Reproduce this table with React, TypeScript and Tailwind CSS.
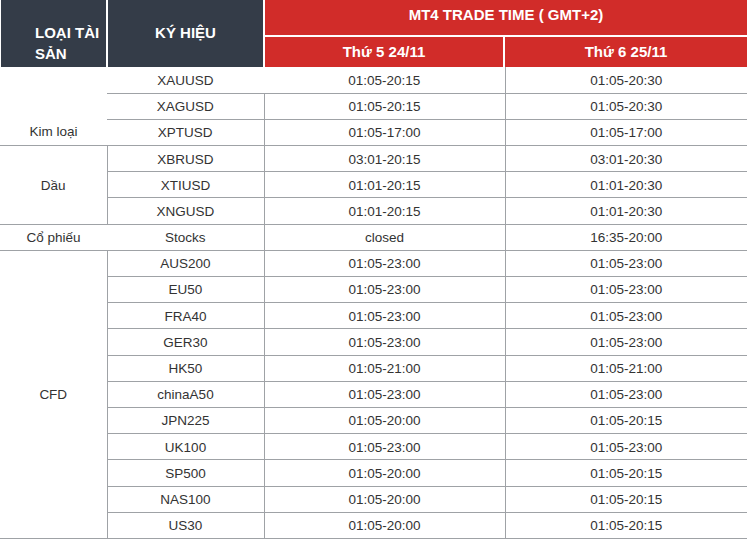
import React from 'react';

type Row = { sym: string; d1: string; d2: string };
type Group = { name: string; rows: Row[]; sideBorder: boolean; labelBottom?: boolean };

const groups: Group[] = [
  {
    name: 'Kim loại',
    sideBorder: false,
    labelBottom: true,
    rows: [
      { sym: 'XAUUSD', d1: '01:05-20:15', d2: '01:05-20:30' },
      { sym: 'XAGUSD', d1: '01:05-20:15', d2: '01:05-20:30' },
      { sym: 'XPTUSD', d1: '01:05-17:00', d2: '01:05-17:00' },
    ],
  },
  {
    name: 'Dầu',
    sideBorder: true,
    rows: [
      { sym: 'XBRUSD', d1: '03:01-20:15', d2: '03:01-20:30' },
      { sym: 'XTIUSD', d1: '01:01-20:15', d2: '01:01-20:30' },
      { sym: 'XNGUSD', d1: '01:01-20:15', d2: '01:01-20:30' },
    ],
  },
  {
    name: 'Cổ phiếu',
    sideBorder: false,
    rows: [{ sym: 'Stocks', d1: 'closed', d2: '16:35-20:00' }],
  },
  {
    name: 'CFD',
    sideBorder: true,
    rows: [
      { sym: 'AUS200', d1: '01:05-23:00', d2: '01:05-23:00' },
      { sym: 'EU50', d1: '01:05-23:00', d2: '01:05-23:00' },
      { sym: 'FRA40', d1: '01:05-23:00', d2: '01:05-23:00' },
      { sym: 'GER30', d1: '01:05-23:00', d2: '01:05-23:00' },
      { sym: 'HK50', d1: '01:05-21:00', d2: '01:05-21:00' },
      { sym: 'chinaA50', d1: '01:05-23:00', d2: '01:05-23:00' },
      { sym: 'JPN225', d1: '01:05-20:00', d2: '01:05-20:15' },
      { sym: 'UK100', d1: '01:05-23:00', d2: '01:05-23:00' },
      { sym: 'SP500', d1: '01:05-20:00', d2: '01:05-20:15' },
      { sym: 'NAS100', d1: '01:05-20:00', d2: '01:05-20:15' },
      { sym: 'US30', d1: '01:05-20:00', d2: '01:05-20:15' },
    ],
  },
];

const Header: React.FC = () => (
  <div className="flex h-[67px] bg-white text-white font-bold text-[15px]">
    <div className="ml-px w-[105px] bg-[#343c48] pl-[34px] pt-[22px] leading-[21px]">
      LOẠI TÀI
      <br />
      SẢN
    </div>
    <div className="ml-[2px] w-[155px] bg-[#343c48] pt-[22px] leading-[21px] text-center">KÝ HIỆU</div>
    <div className="ml-[2px] flex flex-1 flex-col gap-[2px]">
      <div className="flex h-[35px] items-center justify-center bg-[#d12c29] pb-1">MT4 TRADE TIME ( GMT+2)</div>
      <div className="flex h-[30px] gap-[2px]">
        <div className="flex w-[238px] items-center justify-center bg-[#d12c29]">Thứ 5 24/11</div>
        <div className="flex flex-1 items-center justify-center bg-[#d12c29]">Thứ 6 25/11</div>
      </div>
    </div>
  </div>
);

export default function App() {
  return (
    <div className="w-[747px] h-[540px] overflow-hidden bg-white font-['Liberation_Sans',Arial,sans-serif]">
      <Header />
      <table className="w-[747px] table-fixed border-collapse text-[13.5px] text-[#333]">
        <colgroup>
          <col className="w-[107px]" />
          <col className="w-[157px]" />
          <col className="w-[241px]" />
          <col className="w-[242px]" />
        </colgroup>
        <tbody>
          {groups.map((g) =>
            g.rows.map((r, i) => (
              <tr key={r.sym} className="h-[26.2px]">
                {i === 0 && (
                  <td
                    rowSpan={g.rows.length}
                    className={
                      'border-b border-[#9fa2a6] p-0 text-center ' +
                      (g.sideBorder ? 'border-r pt-[2px] ' : 'pt-[2px] ') +
                      (g.labelBottom ? 'align-bottom pb-[3px]' : 'align-middle')
                    }
                  >
                    {g.name}
                  </td>
                )}
                <td
                  className={
                    'border-b border-[#9fa2a6] p-0 pt-[2px] text-center ' +
                    (r.sym === 'XAUUSD' ? '' : 'border-r')
                  }
                >
                  {r.sym}
                </td>
                <td className="border-b border-r border-[#9fa2a6] p-0 pt-[2px] text-center">{r.d1}</td>
                <td className="border-b border-[#9fa2a6] p-0 pt-[2px] text-center">{r.d2}</td>
              </tr>
            ))
          )}
        </tbody>
      </table>
    </div>
  );
}
